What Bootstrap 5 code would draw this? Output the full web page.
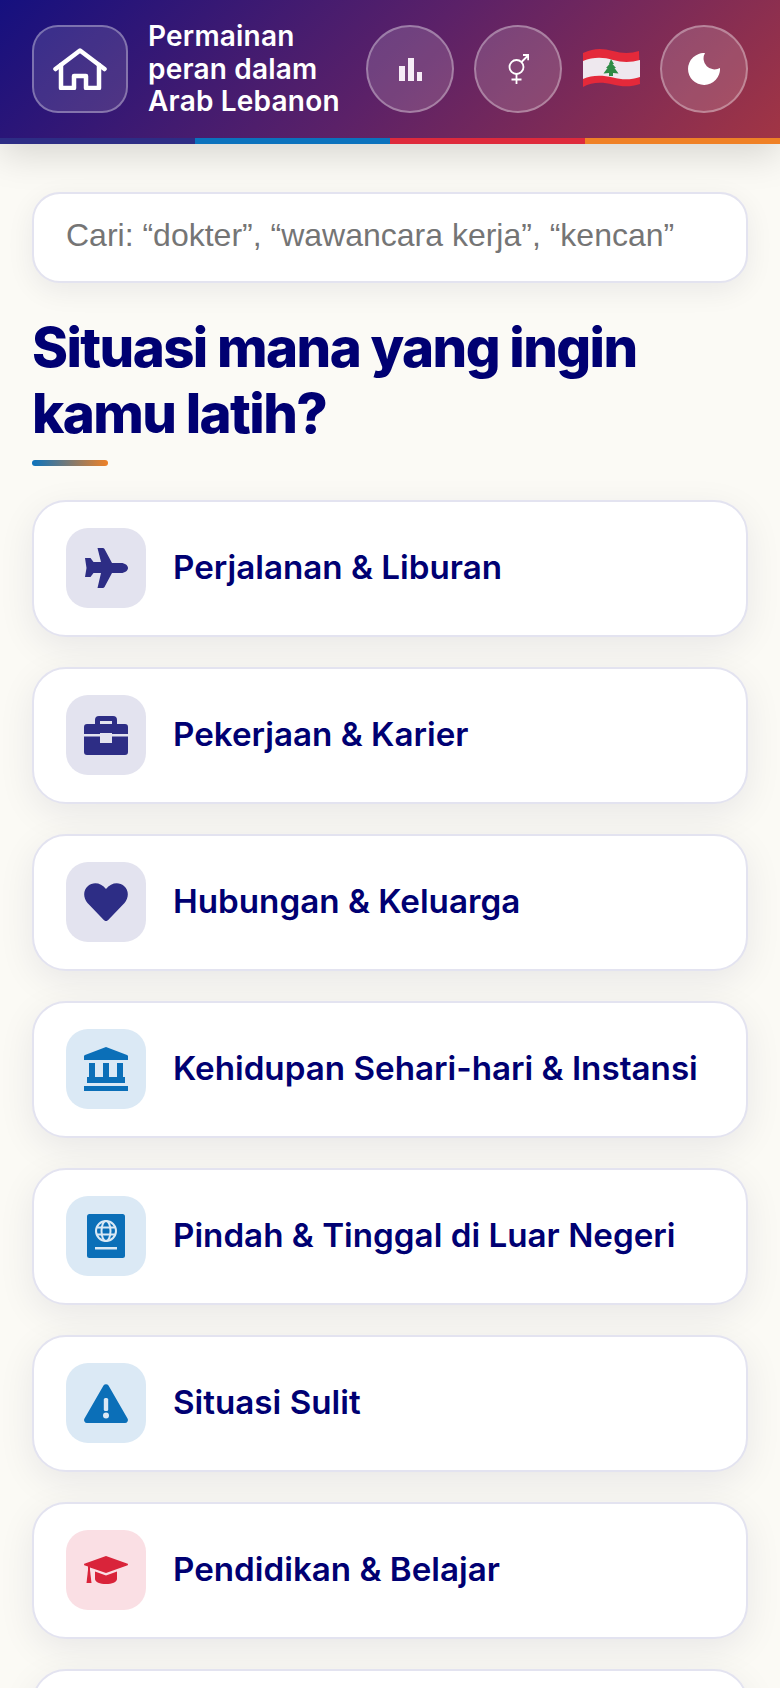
<!DOCTYPE html>
<html lang="id">
<head>
    <meta charset="UTF-8">
    <meta name="viewport" content="width=device-width, initial-scale=1.0">
    <title>Permainan peran dalam Arab Lebanon</title>
    <link href="https://cdn.jsdelivr.net/npm/bootstrap@5.3.2/dist/css/bootstrap.min.css" rel="stylesheet">
    <style>
        html, body { height: 100vh; overflow: hidden; }
        body { background: #fbfaf5; font-family: "Inter", "Liberation Sans", sans-serif; }
        .topbar { height: 144px; background: linear-gradient(135deg, #15107f 0%, #5b2168 50%, #a23544 100%); box-shadow: 0 10px 36px rgba(0,0,0,.15); position: relative; }
        .topbar-row { height: 138px; padding: 0 32px; }
        .stripe { height: 6px; }
        .stripe div { flex: 1; }
        .stripe-navy { background: #2d2d85; }
        .stripe-blue { background: #0b72bd; }
        .stripe-red { background: #de2a3c; }
        .stripe-orange { background: #ef8126; }
        .home-btn { width: 96px; height: 88px; border-radius: 26px; background: rgba(255,255,255,.12); border: 2px solid rgba(255,255,255,.32); }
        .app-title { width: 198px; margin-left: 20px; color: #fff; font-size: 28px; font-weight: 600; line-height: 32.5px; letter-spacing: .2px; }
        .round-btn { width: 88px; height: 88px; border-radius: 50%; background: rgba(255,255,255,.15); border: 2px solid rgba(255,255,255,.32); flex-shrink: 0; }
        .topbar-actions { gap: 20px; }
        .page-body { padding: 48px 32px 0; }
        .search-box.form-control { height: 91px; border: 2px solid #e3e3f0; border-radius: 28px; padding: 0 32px 4px; font-family: "Liberation Sans", sans-serif; font-size: 32px; box-shadow: 0 8px 28px rgba(0,0,60,.07); }
        .search-box.form-control::placeholder { color: #757575; opacity: 1; }
        .page-title { color: #000072; font-size: 54.6px; font-weight: 800; line-height: 66px; letter-spacing: -1.6px; margin: 30.5px 0 0; }
        .title-rule { width: 76px; height: 6px; border-radius: 3px; background: linear-gradient(90deg, #0b72bd, #ef8126); margin-top: 14.5px; margin-bottom: 33.5px; }
        .scene-list { gap: 30px; }
        .scene-card { height: 137px; flex-shrink: 0; background: #fff; border: 2px solid #e3e3f0; border-radius: 34px; padding: 0 32px; box-shadow: 0 10px 36px rgba(0,0,60,.08); }
        .scene-tile { width: 80px; height: 80px; border-radius: 22px; flex-shrink: 0; margin-right: 27px; }
        .scene-name { color: #000072; font-size: 33.2px; font-weight: 600; white-space: nowrap; }
        .tile-purple { background: #e3e3ef; color: #2d2d85; }
        .tile-blue { background: #dbe9f5; color: #0b6fb8; }
        .tile-red { background: #fadfe4; color: #d9243a; }
    </style>
</head>
<body>
<header class="topbar">
    <div class="topbar-row d-flex align-items-center">
        <div class="home-btn d-flex align-items-center justify-content-center flex-shrink-0">
            <svg width="54" height="42" viewBox="0 0 54 42" fill="none" stroke="#fff" stroke-width="4.500" stroke-linejoin="round" stroke-linecap="round"><path d="M2.500 21 27 2.500 51.500 21"/><path d="M8 17v23h13V28h12v12h13V17"/></svg>
        </div>
        <div class="app-title flex-shrink-0">Permainan peran dalam Arab Lebanon</div>
        <div class="topbar-actions d-flex align-items-center ms-auto">
            <div class="round-btn d-flex align-items-center justify-content-center">
                <svg width="23" height="23" viewBox="0 0 23 23" fill="#f6ecf6"><rect x="0" y="8" width="6" height="15"/><rect x="9" y="0" width="6" height="23"/><rect x="18" y="14" width="5" height="9"/></svg>
            </div>
            <div class="round-btn d-flex align-items-center justify-content-center">
                <svg width="21" height="30" viewBox="0 0 21 30" fill="none" stroke="#fff" stroke-width="1.800"><circle cx="8.500" cy="13" r="7"/><path d="M8.500 20v10M3.500 25.500h10M13.500 8 20 1.500M15 1h5.200v5.200"/></svg>
            </div>
            <svg class="flex-shrink-0" width="58" height="42" viewBox="0 0 58 42">
                <path d="M1 5C12 0 20 0 31 3c9 2.500 18 2.500 26 0l1 33c-9 3-18 3-27 .5C20 34 10 34 1 39z" fill="#e4293a"/>
                <path d="M1 13c10-4 20-4 30-1 9 2.500 18 2.500 27 0v17c-9 3-18 3-27 .5C20 27 10 27 1 31z" fill="#eee8ee"/>
                <path d="M29 11l3 5h-1.500l3.500 4h-1.500l4 5.500-5.500-.5V28h-4v-3l-5.500.5 4-5.500h-1.500l3.500-4H27z" fill="#2e8b45"/>
            </svg>
            <div class="round-btn d-flex align-items-center justify-content-center">
                <svg width="32" height="32" viewBox="0 0 32 32" fill="#fff"><path d="M17 0A16 16 0 1 0 32 15 11 11 0 0 1 17 0z"/></svg>
            </div>
        </div>
    </div>
    <div class="stripe d-flex">
        <div class="stripe-navy"></div><div class="stripe-blue"></div><div class="stripe-red"></div><div class="stripe-orange"></div>
    </div>
</header>

<main class="page-body">
    <input type="text" class="form-control search-box" placeholder="Cari: “dokter”, “wawancara kerja”, “kencan”">
    <h1 class="page-title">Situasi mana yang ingin kamu latih?</h1>
    <div class="title-rule"></div>

    <div class="scene-list d-flex flex-column">
        <div class="scene-card d-flex align-items-center">
            <div class="scene-tile tile-purple d-flex align-items-center justify-content-center">
                <svg width="44" height="40" viewBox="0 0 44 40" fill="currentColor"><path d="M44 20c0 2.500-3 5-7 5H28l-7.500 14a2 2 0 0 1-1.700 1h-5.300l3.500-15H9.500l-3 4H1l1.500-9L1 10h5.500l3 4H17L13.500 0h5.300a2 2 0 0 1 1.700 1L28 15h9c4 0 7 2.500 7 5z"/></svg>
            </div>
            <div class="scene-name">Perjalanan &amp; Liburan</div>
        </div>
        <div class="scene-card d-flex align-items-center">
            <div class="scene-tile tile-purple d-flex align-items-center justify-content-center">
                <svg width="44" height="39" viewBox="0 0 44 39" fill="currentColor"><path fill-rule="evenodd" d="M11 8V4a4 4 0 0 1 4-4h14a4 4 0 0 1 4 4v4h8a3 3 0 0 1 3 3v7H28v-1H16v1H0v-7a3 3 0 0 1 3-3zm5-3v3h12V5z"/><path d="M0 20.500h16V27h12v-6.500h16V36a3 3 0 0 1-3 3H3a3 3 0 0 1-3-3z"/></svg>
            </div>
            <div class="scene-name">Pekerjaan &amp; Karier</div>
        </div>
        <div class="scene-card d-flex align-items-center">
            <div class="scene-tile tile-purple d-flex align-items-center justify-content-center">
                <svg width="44" height="38" viewBox="0 0 44 38" fill="currentColor"><path d="M22 38c-1 0-1.600-.5-2.200-1L3.500 20C-1 15-1 7 4 3c5-4.300 13-3.500 18 3 5-6.500 13-7.300 18-3 5 4 5 12 .5 17L24.200 37c-.6.500-1.200 1-2.200 1z"/></svg>
            </div>
            <div class="scene-name">Hubungan &amp; Keluarga</div>
        </div>
        <div class="scene-card d-flex align-items-center">
            <div class="scene-tile tile-blue d-flex align-items-center justify-content-center">
                <svg width="44" height="44" viewBox="0 0 44 44" fill="currentColor"><path d="M22 0 43 8a1.500 1.500 0 0 1 1 1.500V13H0V9.500A1.500 1.500 0 0 1 1 8z"/><rect x="5" y="16" width="6" height="15"/><rect x="19" y="16" width="6" height="15"/><rect x="33" y="16" width="6" height="15"/><rect x="3" y="30" width="38" height="6"/><rect x="0" y="39" width="44" height="5"/></svg>
            </div>
            <div class="scene-name">Kehidupan Sehari-hari &amp; Instansi</div>
        </div>
        <div class="scene-card d-flex align-items-center">
            <div class="scene-tile tile-blue d-flex align-items-center justify-content-center">
                <svg width="38" height="44" viewBox="0 0 38 44"><rect width="38" height="44" rx="2.500" fill="currentColor"/><g fill="none" stroke="#dbe9f5" stroke-width="2"><circle cx="19" cy="17" r="10"/><ellipse cx="19" cy="17" rx="4.500" ry="10"/><path d="M9 13.500h20M9 20.500h20"/></g><rect x="8" y="33" width="22" height="2.500" fill="#dbe9f5"/></svg>
            </div>
            <div class="scene-name">Pindah &amp; Tinggal di Luar Negeri</div>
        </div>
        <div class="scene-card d-flex align-items-center">
            <div class="scene-tile tile-blue d-flex align-items-center justify-content-center">
                <svg width="44" height="39" viewBox="0 0 44 39"><path d="M19.500 1.500a3 3 0 0 1 5 0l19 33a3 3 0 0 1-2.500 4.500H3a3 3 0 0 1-2.500-4.500z" fill="currentColor"/><rect x="19.800" y="14" width="4.400" height="13" rx="1.500" fill="#dbe9f5"/><circle cx="22" cy="31.500" r="3" fill="#dbe9f5"/></svg>
            </div>
            <div class="scene-name">Situasi Sulit</div>
        </div>
        <div class="scene-card d-flex align-items-center">
            <div class="scene-tile tile-red d-flex align-items-center justify-content-center">
                <svg width="44" height="28" viewBox="0 0 44 28" fill="currentColor"><path d="M22 0 43 7.500a1 1 0 0 1 0 2L22 17 6 11.500V14H4V10.500L1 9.500a1 1 0 0 1 0-2z"/><path d="M11 15.500 22 19.500 33 15.500V23c0 3-5 5-11 5s-11-2-11-5z"/><path d="M4 14h2l1.500 13h-5z"/></svg>
            </div>
            <div class="scene-name">Pendidikan &amp; Belajar</div>
        </div>
        <div class="scene-card"></div>
    </div>
</main>
</body>
</html>
